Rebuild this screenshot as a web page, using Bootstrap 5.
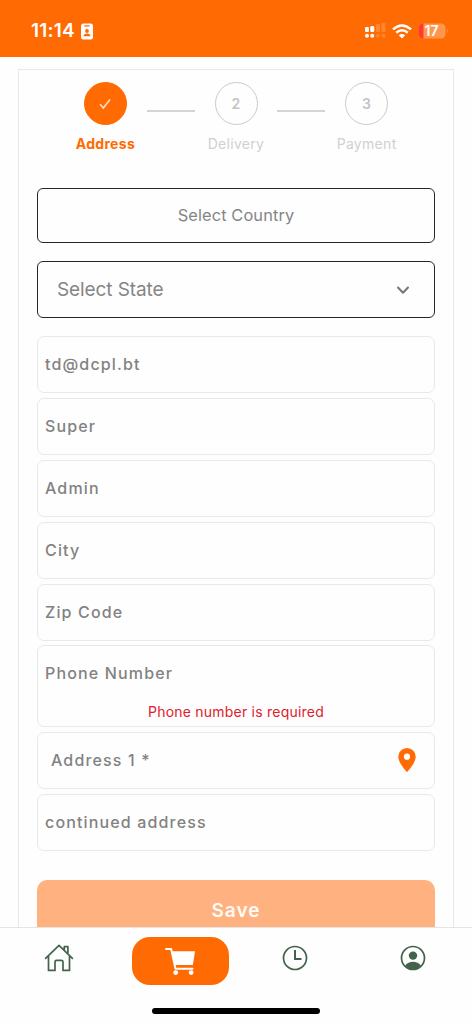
<!DOCTYPE html>
<html lang="en">
<head>
<meta charset="utf-8">
<meta name="viewport" content="width=device-width, initial-scale=1">
<title>Checkout – Address</title>
<link href="https://cdn.jsdelivr.net/npm/bootstrap@5.3.0/dist/css/bootstrap.min.css" rel="stylesheet">
<style>
  :root { --brand: #ff6b02; --ink: #43634c; }
  body { font-family: Inter, "Liberation Sans", sans-serif; background: #fefefe; color: #858585; }
  svg { display: block; flex: none; }
  .screen { height: 1024px; }
  .status { height: 57px; background: var(--brand); color: #fff; padding: 5px 23px 0 31px; }
  .clock { font-size: 19px; font-weight: 600; letter-spacing: .2px; }
  .status-icon { margin-left: 6px; }
  .id-icon { margin-left: 5px; }
  .viewport { min-height: 0; padding: 12px 18px 0 18px; }
  .panel { height: 900px; border: 1px solid #e9e9e9; padding: 12px 18px 0; }
  .steps { height: 106px; }
  .step { width: 82.6px; font-size: 14px; letter-spacing: .3px; color: #d0d0d0; }
  .dot { width: 43px; height: 43px; border: 1.5px solid #cacaca; font-size: 14px; font-weight: 600; color: #c4c4c4; margin-bottom: 8px; }
  .step.active { color: var(--brand); font-weight: 700; }
  .step.active .dot { background: var(--brand); border-color: var(--brand); }
  .rail { width: 48px; height: 1.5px; background: #d4d4d4; margin-top: 28px; }
  .picker { border: 1.5px solid #262626; border-radius: 6px; }
  .country { height: 55px; font-size: 16.4px; letter-spacing: .1px; margin-bottom: 18px; }
  .state { height: 57px; font-size: 19px; letter-spacing: -.1px; padding: 2px 24px 0 19px; margin-bottom: 18.4px; }
  .field { height: 57px; border: 1.5px solid #e9e9e9; border-radius: 7px; padding: 0 7px; margin-bottom: 4.8px; font-size: 16px; font-weight: 500; letter-spacing: 1.15px; line-height: 55.5px; color: #828282; }
  .field.invalid { height: 81.8px; }
  .error { font-size: 14px; font-weight: 400; letter-spacing: .22px; line-height: 20px; color: #e0202c; }
  .pin { margin-right: 10px; }
  .address-label { padding-left: 6px; }
  .save { height: 62px; margin-top: 29.2px; border: 0; border-radius: 10px 10px 0 0; background: #ffb280; color: #fffaf5; font-size: 19px; font-weight: 600; letter-spacing: 1px; }
  .tabs { height: 97px; border-top: 1.5px solid #e4e4e4; color: var(--ink); background: #fefefe; }
  .tab { height: 60px; }
  .pill { width: 97px; height: 48px; border-radius: 18px; background: var(--brand); color: #fff; margin: 9px 0 0 7px; }
  .home-bar { width: 168px; height: 6px; background: #000; margin-top: 20px; }
</style>
</head>
<body>
<div class="screen d-flex flex-column overflow-hidden">
  <header class="status flex-shrink-0 d-flex align-items-center justify-content-between">
    <div class="d-flex align-items-center">
      <span class="clock">11:14</span>
      <svg class="id-icon" width="14" height="17" viewBox="0 0 14 17"><rect x="1" y=".5" width="12" height="16" rx="2.5" fill="#fff"/><path d="M4.8 2.8h4.4" stroke="#ff6b02" stroke-width="1.2" stroke-linecap="round"/><circle cx="7" cy="8" r="1.9" fill="#ff6b02"/><path d="M3.5 13.3c0-3.8 7-3.8 7 0z" fill="#ff6b02"/></svg>
    </div>
    <div class="d-flex align-items-center">
      <svg width="22" height="16" viewBox="0 0 22 16" fill="#fff"><rect x="1" y="4" width="4" height="5" rx="1.3"/><rect x="6.3" y="3" width="4" height="6" rx="1.3"/><g opacity=".18"><rect x="12" y="1" width="4" height="8" rx="1.3"/><rect x="17.5" y="0" width="4" height="9" rx="1.3"/><circle cx="14" cy="12.8" r="2"/><circle cx="19.5" cy="12.8" r="2"/></g><circle cx="3" cy="12.8" r="2"/><circle cx="8.3" cy="12.8" r="2"/></svg>
      <svg class="status-icon" width="20" height="15" viewBox="0 0 20 15" fill="none" stroke="#fff" stroke-width="2.5"><path d="M1 5.4Q10-2.4 19 5.4M4.2 8.8q5.8-5 11.6 0"/><path d="M10 14.4 6.8 11.3q3.2-2.5 6.4 0z" fill="#fff" stroke="none"/></svg>
      <svg class="status-icon" width="31" height="16" viewBox="0 0 31 16"><rect x=".5" y=".5" width="27" height="15" rx="4.5" fill="#ff9650"/><path d="M5.5.5H5A4.5 4.5 0 0 0 .5 5v6A4.5 4.5 0 0 0 5 15.5h.5z" fill="#ff3b30"/><path d="M29 5.5q2 2.3 0 4.6z" fill="#ff9650"/><text x="13.5" y="12.9" text-anchor="middle" font-size="14" font-weight="600" fill="#fff">17</text></svg>
    </div>
  </header>

  <main class="viewport flex-grow-1 overflow-hidden">
    <div class="panel">
      <div class="steps d-flex justify-content-center align-items-start">
        <div class="step active d-flex flex-column align-items-center">
          <div class="dot rounded-circle d-flex align-items-center justify-content-center">
            <svg width="12" height="12" viewBox="0 0 12 12" fill="none" stroke="#ffe0c4" stroke-width="1.6"><path d="M1 6.2 4.3 10 11 1.5"/></svg>
          </div>
          <span>Address</span>
        </div>
        <div class="rail"></div>
        <div class="step d-flex flex-column align-items-center">
          <div class="dot rounded-circle d-flex align-items-center justify-content-center">2</div>
          <span>Delivery</span>
        </div>
        <div class="rail"></div>
        <div class="step d-flex flex-column align-items-center">
          <div class="dot rounded-circle d-flex align-items-center justify-content-center">3</div>
          <span>Payment</span>
        </div>
      </div>

      <div class="picker country d-flex align-items-center justify-content-center">Select Country</div>
      <div class="picker state d-flex align-items-center justify-content-between">
        <span>Select State</span>
        <svg width="14" height="9" viewBox="0 0 14 9" fill="none" stroke="#777" stroke-width="2" stroke-linecap="round" stroke-linejoin="round"><path d="M2 1.5 7 6.8 12 1.5"/></svg>
      </div>

      <div class="field">td@dcpl.bt</div>
      <div class="field">Super</div>
      <div class="field">Admin</div>
      <div class="field">City</div>
      <div class="field">Zip Code</div>
      <div class="field invalid">Phone Number
        <div class="error text-center">Phone number is required</div>
      </div>
      <div class="field d-flex align-items-center justify-content-between">
        <span class="address-label">Address 1 *</span>
        <svg class="pin" width="20" height="26" viewBox="0 0 20 26"><path fill="#ff6b02" fill-rule="evenodd" d="M10 1a8.7 8.7 0 0 0-8.7 8.7C1.3 16 10 25.2 10 25.2S18.7 16 18.7 9.7A8.7 8.7 0 0 0 10 1zm0 5.6a3.1 3.1 0 1 1 0 6.2 3.1 3.1 0 0 1 0-6.2z"/></svg>
      </div>
      <div class="field">continued address</div>
      <button class="save w-100 d-block p-0">Save</button>
    </div>
  </main>

  <nav class="tabs flex-shrink-0">
    <div class="row g-0">
      <div class="tab col-3 d-flex align-items-center justify-content-center">
        <svg width="30" height="28" viewBox="0 0 30 28" fill="none" stroke="currentColor" stroke-width="1.7" stroke-linejoin="round" stroke-linecap="round"><path d="M1.6 14.3 15 1.4 28.4 14.3M4.5 12v14.4h6.500V18q0-1.600 1.600-1.600h4.800Q19 16.400 19 18v8.400h6.500V12M20.300 5.500V2.700h3.600v6.500"/></svg>
      </div>
      <div class="tab col-3 d-flex align-items-start justify-content-center">
        <div class="pill d-flex align-items-center justify-content-center">
          <svg width="31" height="29" viewBox="0 0 32 30"><path fill="#fff" d="M6.500 4.500H31l-2.200 14H10z"/><path d="M1 2h5.300l4.500 20.500h17.700" fill="none" stroke="#fff" stroke-width="2" stroke-linecap="round" stroke-linejoin="round"/><circle cx="11" cy="26.500" r="2.500" fill="#fff"/><circle cx="27" cy="26.500" r="2.500" fill="#fff"/></svg>
        </div>
      </div>
      <div class="tab col-3 d-flex align-items-center justify-content-center">
        <svg width="26" height="26" viewBox="0 0 26 26" fill="none" stroke="currentColor"><circle cx="13" cy="13" r="11.500" stroke-width="1.700"/><path d="M13 5v9h6.500" stroke-width="2"/></svg>
      </div>
      <div class="tab col-3 d-flex align-items-center justify-content-center">
        <svg width="26" height="26" viewBox="0 0 26 26"><circle cx="13" cy="13" r="11.500" fill="none" stroke="currentColor" stroke-width="1.700"/><circle cx="13" cy="10.600" r="4.200" fill="currentColor"/><path d="M5.200 20.500Q8 16.800 13 16.800t7.800 3.700Q17.500 24.500 13 24.500t-7.800-4z" fill="currentColor"/></svg>
      </div>
    </div>
    <div class="home-bar rounded-pill mx-auto"></div>
  </nav>
</div>
<script src="https://cdn.jsdelivr.net/npm/bootstrap@5.3.0/dist/js/bootstrap.bundle.min.js"></script>
</body>
</html>
